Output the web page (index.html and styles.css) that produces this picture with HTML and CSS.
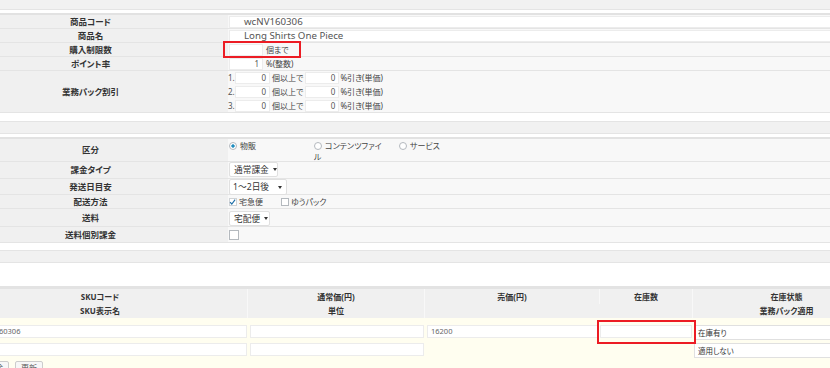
FILE: index.html
```html
<!DOCTYPE html>
<html>
<head>
  <meta charset="utf-8">
  <title>商品登録</title>
  <link rel="stylesheet" href="styles.css">
</head>
<body>
<div class="page">

  <div class="sec first">
    <div class="sec-head"></div>
    <div class="form">
      <div class="row h14">
        <div class="lbl">商品コード</div>
        <div class="val"><span class="field wide">wcNV160306</span></div>
      </div>
      <div class="row h14">
        <div class="lbl">商品名</div>
        <div class="val"><span class="field wide">Long Shirts One Piece</span></div>
      </div>
      <div class="row h14">
        <div class="lbl">購入制限数</div>
        <div class="val"><span class="mark limit"><span class="field num"></span><span class="unit">個まで</span></span></div>
      </div>
      <div class="row h14">
        <div class="lbl">ポイント率</div>
        <div class="val"><span class="field num">1</span><span class="unit">%(整数)</span></div>
      </div>
      <div class="row h42">
        <div class="lbl">業務パック割引</div>
        <div class="val">
          <div class="tier"><span class="no">1.</span><span class="field num n1">0</span><span class="unit">個以上で</span><span class="field num n2">0</span><span class="unit u2">%引き(単価)</span></div>
          <div class="tier"><span class="no">2.</span><span class="field num n1">0</span><span class="unit">個以上で</span><span class="field num n2">0</span><span class="unit u2">%引き(単価)</span></div>
          <div class="tier"><span class="no">3.</span><span class="field num n1">0</span><span class="unit">個以上で</span><span class="field num n2">0</span><span class="unit u2">%引き(単価)</span></div>
        </div>
      </div>
    </div>
  </div>

  <div class="sec">
    <div class="sec-head"></div>
    <div class="form">
      <div class="row h23">
        <div class="lbl">区分</div>
        <div class="val">
          <div class="opts">
            <span class="opt"><span class="radio on"></span>物販</span>
            <span class="opt"><span class="radio"></span>コンテンツファイル</span>
            <span class="opt"><span class="radio"></span>サービス</span>
          </div>
        </div>
      </div>
      <div class="row h17">
        <div class="lbl">課金タイプ</div>
        <div class="val flush"><span class="select w48">通常課金</span></div>
      </div>
      <div class="row h16">
        <div class="lbl">発送日目安</div>
        <div class="val flush"><span class="select tall w57">1〜2日後</span></div>
      </div>
      <div class="row h14">
        <div class="lbl">配送方法</div>
        <div class="val pt2">
          <span class="chk-opt"><span class="check on"><svg viewBox="0 0 8 8" width="8" height="8"><path d="M1.2 4.2 L3.2 6.3 L7 1.2" fill="none" stroke="#1e6fa8" stroke-width="1.3"/></svg></span>宅急便</span>
          <span class="chk-opt"><span class="check"></span>ゆうパック</span>
        </div>
      </div>
      <div class="row h18">
        <div class="lbl">送料</div>
        <div class="val pt2"><span class="select w40">宅配便</span></div>
      </div>
      <div class="row h16">
        <div class="lbl">送料個別課金</div>
        <div class="val pt3"><span class="check big"></span></div>
      </div>
    </div>
  </div>

  <div class="sec last">
    <div class="sec-head"></div>
    <div class="spacer"></div>
    <div class="sku-head">
      <div class="c">SKUコード</div>
      <div class="c">通常価(円)</div>
      <div class="c">売価(円)</div>
      <div class="c">在庫数</div>
      <div class="c">在庫状態</div>
      <div class="c r2">SKU表示名</div>
      <div class="c r2">単位</div>
      <div class="c r2 span2"></div>
      <div class="c r2">業務パック適用</div>
    </div>
    <div class="sku-body">
      <div class="sku-row">
        <div class="cell first"><span class="field sku">wcNV160306</span></div>
        <div class="cell"><span class="field sku"></span></div>
        <div class="cell"><span class="field sku">16200</span></div>
        <div class="cell stock"><span class="mark qty"><span class="field sku"></span></span></div>
        <div class="cell last"><span class="select pick">在庫有り</span></div>
      </div>
      <div class="sku-row">
        <div class="cell first"><span class="field sku"></span></div>
        <div class="cell"><span class="field sku"></span></div>
        <div class="cell span2"></div>
        <div class="cell last"><span class="select pick">適用しない</span></div>
      </div>
      <div class="actions">
        <button class="btn">削除</button>
        <button class="btn">更新</button>
      </div>
    </div>
  </div>

</div>
</body>
</html>
```

FILE: styles.css
```css
html, body { margin: 0; padding: 0; overflow: hidden; }
body { background: #fff; color: #333; font-family: "Noto Sans", "Noto Sans CJK JP", sans-serif; font-size: 8px; line-height: 12px; font-feature-settings: "palt"; }

.page { width: 928px; margin-left: -47px; }

/* sections */
.sec { margin-top: 8px; }
.sec.first { margin-top: -3px; }
.sec.last { margin-top: 7px; }
.sec-head { height: 11px; background: #f1f1f1; border-top: 1px solid #e4e4e4; border-bottom: 1px solid #e4e4e4; margin-bottom: 3px; }

/* label / value rows */
.form { border-top: 2px solid #e2e2e2; }
.row { display: flex; box-sizing: border-box; border-bottom: 1px solid #e4e4e4; }
.h14 { height: 14px; }
.h16 { height: 16px; }
.h17 { height: 17px; }
.h18 { height: 18px; }
.h23 { height: 23px; }
.h42 { height: 42px; }
.lbl { width: 275px; flex: none; display: flex; align-items: center; justify-content: center; background: #f0f0f0; font-size: 8.5px; font-weight: bold; color: #333; }
.val { flex: 1; background: #f8f8f8; padding: 1px 0 0 1px; }
.val.flush { padding-top: 0; }
.val.pt2 { padding-top: 2px; }
.val.pt3 { padding-top: 3px; }

.field { display: inline-block; vertical-align: top; box-sizing: border-box; height: 12px; background: #fff; border: 1px solid #ececec; line-height: 10px; color: #555; }
.wide { width: 100%; padding-left: 14px; font-size: 9.7px; }
.num { width: 34px; text-align: right; padding-right: 3px; }
.unit { display: inline-block; vertical-align: top; margin-left: 3px; color: #444; }

.tier { height: 14px; display: flex; align-items: flex-start; }
.tier .no { width: 6px; margin-left: -1px; margin-right: 1px; color: #555; }
.tier .n1 { width: 35px; }
.tier .unit { margin-left: 2px; }
.tier .n2 { width: 34px; margin-left: 2px; }
.tier .u2 { margin-left: 1px; }

/* red annotation boxes */
.mark { position: relative; display: inline-flex; }
.mark::after { content: ""; position: absolute; border: 2px solid #ec1c24; }
.limit::after { left: -6px; right: -12px; top: -3px; bottom: -2px; }
.qty { width: 100%; }
.qty::after { left: -3px; right: -4px; top: -5px; bottom: -6px; }

/* radios, checkboxes, selects */
.opts { display: flex; }
.opt { width: 85px; padding-right: 15px; box-sizing: border-box; line-height: 11px; color: #444; }
.radio { display: inline-block; vertical-align: -1px; width: 8px; height: 8px; box-sizing: border-box; margin-right: 3px; border: 1px solid #b4b9be; border-radius: 50%; background: #fff; }
.radio.on { background: radial-gradient(circle, #1e8cbe 0 1.4px, #fff 1.9px); }

.chk-opt { display: inline-flex; align-items: center; margin-right: 16px; color: #444; line-height: 10px; }
.check { display: inline-flex; width: 8px; height: 8px; box-sizing: border-box; border: 1px solid #b4b9be; background: #fff; margin-right: 2px; }
.check.on { border-color: #d0d3d6; }
.check svg { margin: -1px 0 0 -1px; }
.check.big { width: 10px; height: 10px; }

.select { display: inline-flex; align-items: center; justify-content: space-between; gap: 4px; box-sizing: border-box; height: 15px; padding: 0 4px; background: #fff; border: 1px solid #e0e0e0; border-radius: 2px; font-size: 8.7px; color: #333; white-space: nowrap; vertical-align: top; }
.select::after { content: ""; flex: none; border-top: 3px solid #333; border-left: 2px solid transparent; border-right: 2px solid transparent; }
.select.tall { height: 16px; padding-left: 3px; }
.w40 { width: 41px; }
.w48 { width: 49px; }
.w57 { width: 58px; }

/* SKU table */
.spacer { height: 20px; }
.sku-head, .sku-row { display: grid; grid-template-columns: 295px 177px 175px 93px 188px; }
.sku-head { background: #f0f0f0; border-top: 3px solid #e3e3e3; }
.sku-head .c { height: 15px; display: flex; align-items: center; justify-content: center; border-right: 1px solid #f8f8f8; font-weight: bold; color: #333; }
.sku-head .c.r2 { height: 14px; }
.span2 { grid-column: span 2; }

.sku-body { background: #fffef0; padding-top: 7px; height: 60px; }
.sku-row { height: 18px; }
.cell { padding: 0 1px 0 2px; }
.cell.first { padding: 0 1px 0 18px; }
.cell.stock { padding: 0 1px 0 0; }
.cell.last { padding: 0 0 0 1px; }
.field.sku { width: 100%; height: 13px; padding-left: 3px; font-size: 7.5px; line-height: 11px; color: #666; }
.select.pick { width: 100%; height: 15px; border-radius: 0; font-size: 7.5px; padding-left: 3px; justify-content: flex-start; }
.select.pick::after { display: none; }

.actions { display: flex; gap: 6px; padding-left: 28px; }
.btn { height: 14px; padding: 0 5px; font-family: inherit; font-size: 8px; line-height: 12px; color: #555; background: #f7f7f7; border: 1px solid #ccc; border-radius: 2px; }
```
